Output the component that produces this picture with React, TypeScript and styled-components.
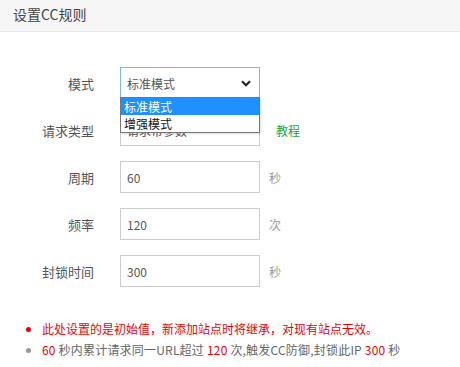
import styled, { createGlobalStyle } from "styled-components";

const GlobalStyle = createGlobalStyle`
  body {
    margin: 0;
    background: #fff;
    font-family: "Microsoft YaHei", "Noto Sans CJK SC", "Noto Sans", sans-serif;
    color: #555;
  }
`;

const Page = styled.div`
  width: 460px;
  height: 367px;
  background: #fff;
  overflow: hidden;
`;

const Header = styled.div`
  height: 31px;
  background: #f6f6f6;
  border-bottom: 1px solid #e8e8e8;
  padding-left: 13px;
  font-size: 14px;
  line-height: 28px;
  color: #444;
`;

const Form = styled.div`
  display: flex;
  flex-direction: column;
  gap: 15px;
  padding: 35px 0 0;
`;

const Row = styled.div`
  display: flex;
  align-items: center;
  height: 32px;
  position: relative;
`;

const Label = styled.div`
  width: 107px;
  text-align: right;
  font-size: 13px;
  color: #555;
  padding-right: 13px;
  box-sizing: border-box;
  flex-shrink: 0;
`;

const Field = styled.div<{ $focus?: boolean }>`
  width: 140px;
  height: 32px;
  box-sizing: border-box;
  border: 1px solid ${(p) => (p.$focus ? "#80b7e8" : "#ccc")};
  display: flex;
  align-items: center;
  padding: 0 6px;
  font-size: 12px;
  color: #555;
  position: relative;
  margin-left: 13px;
`;

const Chevron = styled.svg`
  position: absolute;
  right: 8px;
  top: 12px;
`;

const Unit = styled.span`
  margin-left: 9px;
  font-size: 12px;
  color: #999;
`;

const Link = styled.span`
  margin-left: 16px;
  font-size: 12px;
  color: #20a53a;
`;

const Menu = styled.div`
  position: absolute;
  left: 120px;
  top: 30px;
  width: 140px;
  box-sizing: border-box;
  border: 1px solid #767676;
  background: #fff;
  z-index: 2;
  box-shadow: 1px 1px 2px rgba(0, 0, 0, 0.15);
`;

const Option = styled.div<{ $active?: boolean }>`
  height: 17px;
  line-height: 17px;
  padding-left: 3px;
  font-size: 12px;
  color: ${(p) => (p.$active ? "#fff" : "#111")};
  background: ${(p) => (p.$active ? "#1e90ff" : "#fff")};
`;

const Notes = styled.ul`
  margin: 31px 0 0;
  padding: 0 0 0 42px;
  font-size: 12px;
  line-height: 21px;
`;

const Note = styled.li<{ $red?: boolean }>`
  color: ${(p) => (p.$red ? "#ef0000" : "#666")};
  letter-spacing: ${(p) => (p.$red ? "0" : "0.2px")};
  &::marker {
    color: ${(p) => (p.$red ? "#ef0000" : "#999")};
  }
`;

const Num = styled.span`
  color: #ef0000;
`;

export default function App() {
  return (
    <Page>
      <GlobalStyle />
      <Header>设置CC规则</Header>
      <Form>
        <Row>
          <Label>模式</Label>
          <Field $focus>
            标准模式
            <Chevron width="10" height="7" viewBox="0 0 10 7">
              <path d="M1 1.2 L5 5.2 L9 1.2" fill="none" stroke="#222" strokeWidth="2.2" />
            </Chevron>
          </Field>
          <Menu>
            <Option $active>标准模式</Option>
            <Option>增强模式</Option>
          </Menu>
        </Row>
        <Row>
          <Label>请求类型</Label>
          <Field>请求带参数</Field>
          <Link>教程</Link>
        </Row>
        <Row>
          <Label>周期</Label>
          <Field>60</Field>
          <Unit>秒</Unit>
        </Row>
        <Row>
          <Label>频率</Label>
          <Field>120</Field>
          <Unit>次</Unit>
        </Row>
        <Row>
          <Label>封锁时间</Label>
          <Field>300</Field>
          <Unit>秒</Unit>
        </Row>
      </Form>
      <Notes>
        <Note $red>此处设置的是初始值，新添加站点时将继承，对现有站点无效。</Note>
        <Note>
          <Num>60</Num> 秒内累计请求同一URL超过 <Num>120</Num> 次,触发CC防御,封锁此IP <Num>300</Num> 秒
        </Note>
      </Notes>
    </Page>
  );
}
